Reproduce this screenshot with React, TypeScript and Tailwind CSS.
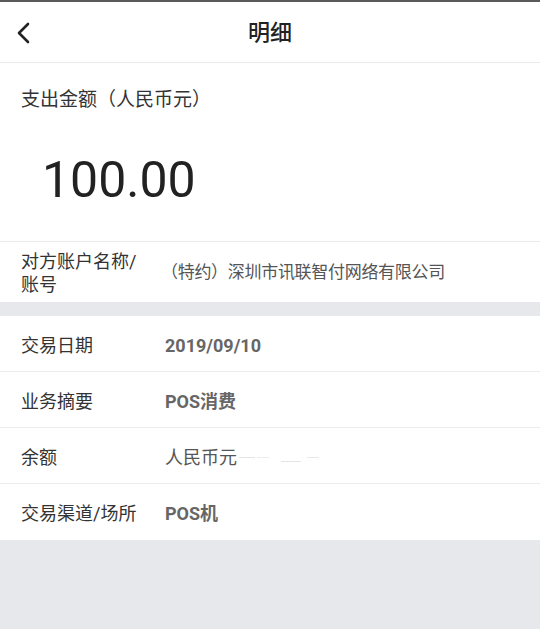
import React from "react";

const font = { fontFamily: 'Roboto, "Noto Sans CJK SC", sans-serif' };

function Row({ label, children, last }: { label: React.ReactNode; children: React.ReactNode; last?: boolean }) {
  return (
    <div className={`flex h-[56px] items-center pt-[3px] ${last ? "" : "border-b border-[#ececec]"}`}>
      <div className="w-[165px] shrink-0 pl-[21px] text-[18px] text-[#333]">{label}</div>
      <div className="flex items-center text-[18px] font-bold text-[#666]">{children}</div>
    </div>
  );
}

export default function App() {
  return (
    <div className="w-[540px] h-[629px] bg-[#e7e8ec] flex flex-col" style={font}>
      <div className="h-[2px] bg-[#5a5a5a]" />
      <div className="relative h-[61px] bg-white border-b border-[#ececec] flex items-center justify-center">
        <svg className="absolute left-[14px] top-[19px]" width="20" height="24" viewBox="0 0 20 24">
          <path d="M14 3 L5 12 L14 21" fill="none" stroke="#222" strokeWidth="2.6" strokeLinecap="round" strokeLinejoin="round" />
        </svg>
        <span className="text-[22px] font-medium text-[#222]">明细</span>
      </div>
      <div className="bg-white">
        <div className="h-[179px] border-b border-[#ececec] flex flex-col">
          <div className="pl-[21px] pt-[23px] text-[19px] leading-[28px] text-[#333]">支出金额（人民币元）</div>
          <div className="pl-[42px] pt-[37px] text-[50px] leading-[58px] text-[#222]">100.00</div>
        </div>
        <div className="flex h-[60px] items-center pt-[2px]">
          <div className="w-[165px] shrink-0 pl-[21px] pr-[20px] text-[18px] leading-[23px] text-[#333]">对方账户名称/<br />账号</div>
          <div className="-ml-[4px] text-[17px] text-[#555] tracking-[-0.3px]">（特约）深圳市讯联智付网络有限公司</div>
        </div>
      </div>
      <div className="h-[14px]" />
      <div className="bg-white">
        <Row label="交易日期">2019/09/10</Row>
        <Row label="业务摘要">POS消费</Row>
        <Row label="余额">
          <span className="font-normal text-[#555]">人民币元</span>
          <span className="ml-[2px] inline-block h-[1px] w-[16px] bg-[#e4e4e4]" />
          <span className="ml-[2px] inline-block h-[1px] w-[12px] bg-[#ececec]" />
          <span className="ml-[12px] mt-[8px] inline-block h-[1px] w-[20px] bg-[#e4e4e4]" />
          <span className="ml-[6px] inline-block h-[1px] w-[12px] bg-[#e8e8e8]" />
        </Row>
        <Row label="交易渠道/场所" last>POS机</Row>
      </div>
    </div>
  );
}
